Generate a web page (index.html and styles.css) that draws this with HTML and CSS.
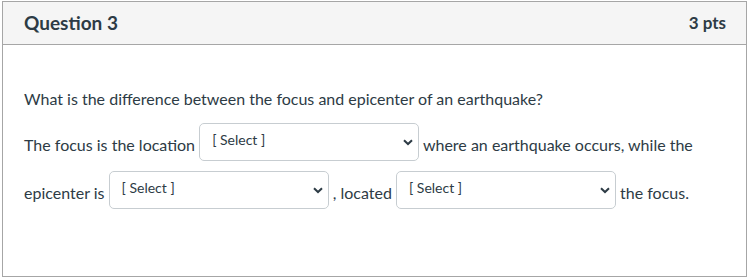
FILE: index.html
```html
<!DOCTYPE html>
<html lang="en">
<head>
    <meta charset="UTF-8">
    <meta name="viewport" content="width=device-width, initial-scale=1.0">
    <title>Question 3</title>
    <link rel="stylesheet" href="styles.css">
</head>
<body>

<div class="question">
    <div class="question-header">
        <span class="question-name">Question 3</span>
        <span class="question-points">3 pts</span>
    </div>

    <div class="question-body">
        <p class="question-prompt">What is the difference between the focus and epicenter of an earthquake?</p>
        <p class="question-blanks">
            The focus is the location
            <span class="dropdown">
                <select>
                    <option>[ Select ]</option>
                </select>
                <svg class="chevron" width="10" height="7" viewBox="0 0 10 7"><path d="M1 1.2 L5 5 L9 1.2" fill="none" stroke="#2d3b45" stroke-width="2"/></svg>
            </span>
            where an earthquake occurs, while the epicenter is
            <span class="dropdown">
                <select>
                    <option>[ Select ]</option>
                </select>
                <svg class="chevron" width="10" height="7" viewBox="0 0 10 7"><path d="M1 1.2 L5 5 L9 1.2" fill="none" stroke="#2d3b45" stroke-width="2"/></svg>
            </span>
            , located
            <span class="dropdown">
                <select>
                    <option>[ Select ]</option>
                </select>
                <svg class="chevron" width="10" height="7" viewBox="0 0 10 7"><path d="M1 1.2 L5 5 L9 1.2" fill="none" stroke="#2d3b45" stroke-width="2"/></svg>
            </span>
            the focus.
        </p>
    </div>
</div>

</body>
</html>
```

FILE: styles.css
```css
body {
    font-family: Lato, "Liberation Sans", sans-serif;
    color: #2d3b45;
    background-color: #ffffff;
    margin: 0;
    padding: 0;
}
.question {
    margin: 1px 3px 0 2px;
    height: 274px;
    border: 1px solid #a6a6a6;
}
.question-header {
    display: flex;
    justify-content: space-between;
    align-items: center;
    height: 40px;
    padding: 0 20px 2px 21px;
    background-color: #f5f5f5;
    border-bottom: 1px solid #a6a6a6;
    font-weight: bold;
}
.question-name {
    font-size: 19px;
}
.question-points {
    font-size: 17px;
}
.question-body {
    padding: 44px 20px 0 21px;
    font-size: 16px;
}
.question-prompt {
    margin: 0;
    line-height: 20px;
}
.question-blanks {
    margin: 12px 0 0;
    line-height: 48px;
}
.dropdown {
    position: relative;
    display: inline-block;
    overflow: hidden;
    vertical-align: -10px;
    line-height: normal;
}
.dropdown select {
    display: block;
    width: 220px;
    height: 38px;
    padding: 0 30px 5px 12px;
    border: 1px solid #c7cdd1;
    border-radius: 5px;
    background-color: #ffffff;
    color: #2d3b45;
    font-family: Lato, "Liberation Sans", sans-serif;
    font-size: 14px;
    appearance: none;
    -webkit-appearance: none;
}
.chevron {
    position: absolute;
    right: 6px;
    top: 16px;
    pointer-events: none;
}
```
